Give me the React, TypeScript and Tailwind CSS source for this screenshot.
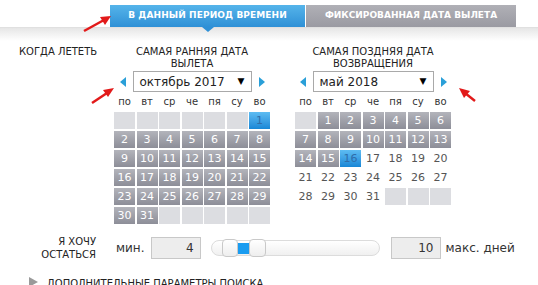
import React from "react";

const font = { fontFamily: '"DejaVu Sans", Verdana, sans-serif' };

type Cell = { t: string; k: "e" | "g" | "b" | "p" };

function Cal({ cells }: { cells: Cell[] }) {
  const days = ["по", "вт", "ср", "че", "пя", "су", "во"];
  return (
    <div className="flex flex-col">
      <div className="grid grid-cols-[repeat(7,21px)] gap-x-[1.5px] h-[20px] items-center">
        {days.map((d) => (
          <div key={d} className="text-center text-[10px] text-[#333] leading-none">
            {d}
          </div>
        ))}
      </div>
      <div className="grid grid-cols-[repeat(7,21px)] gap-x-[1.5px] gap-y-[2px]">
        {cells.map((c, i) => {
          let cls = "";
          if (c.k === "e") cls = "bg-[#dcdde1]";
          else if (c.k === "g") cls = "bg-gradient-to-b from-[#b3b4bb] to-[#8d8e98] text-white";
          else if (c.k === "b") cls = "bg-gradient-to-b from-[#5dbcf2] to-[#1787d6] text-[#2f6eaa]";
          else cls = "bg-white text-[#555]";
          return (
            <div key={i} className={`h-[17px] flex items-center justify-center text-[11px] leading-none ${cls}`}>
              {c.t}
            </div>
          );
        })}
      </div>
    </div>
  );
}

function Arrow({ dir }: { dir: "l" | "r" }) {
  return (
    <svg width="6" height="10" viewBox="0 0 6 10">
      {dir === "l" ? <polygon points="6,0 0,5 6,10" fill="#2a9fd8" /> : <polygon points="0,0 6,5 0,10" fill="#2a9fd8" />}
    </svg>
  );
}

function Select({ text, w }: { text: string; w: string }) {
  return (
    <div className={`h-[21px] ${w} border border-[#a9a9a9] bg-white flex items-center justify-between pl-[6px] pr-[6px]`}>
      <span className="text-[12px] text-[#222] leading-none">{text}</span>
      <span className="text-[9px] text-black leading-none">▼</span>
    </div>
  );
}

export default function App() {
  const left: Cell[] = [];
  for (let i = 0; i < 6; i++) left.push({ t: "", k: "e" });
  left.push({ t: "1", k: "b" });
  for (let d = 2; d <= 31; d++) left.push({ t: String(d), k: "g" });
  for (let i = 0; i < 5; i++) left.push({ t: "", k: "e" });

  const right: Cell[] = [{ t: "", k: "e" }];
  for (let d = 1; d <= 31; d++) right.push({ t: String(d), k: d < 16 ? "g" : d === 16 ? "b" : "p" });
  for (let i = 0; i < 3; i++) right.push({ t: "", k: "e" });

  return (
    <div className="relative w-[538px] h-[285px] overflow-hidden bg-white" style={font}>
      {/* tabs */}
      <div className="flex pt-[5px] pl-[110px] h-[27px]">
        <div className="relative w-[195px] h-[22px] bg-gradient-to-b from-[#55b4ea] to-[#2e90d6] flex items-center justify-center">
          <span className="text-white text-[9px] font-bold tracking-[0.1px]">В ДАННЫЙ ПЕРИОД ВРЕМЕНИ</span>
          <div className="absolute left-[92px] top-[22px] w-0 h-0 border-l-[6px] border-r-[6px] border-t-[5px] border-l-transparent border-r-transparent border-t-[#2e90d6]" />
        </div>
        <div className="ml-[1px] w-[210px] h-[22px] bg-gradient-to-b from-[#b0b0b6] to-[#9a9aa2] flex items-center justify-center">
          <span className="text-white text-[9px] font-bold">ФИКСИРОВАННАЯ ДАТА ВЫЛЕТА</span>
        </div>
      </div>
      <div className="h-[14px] bg-gradient-to-b from-[#e6e6e6] to-white border-t border-[#e0e0e0]" />

      {/* main row */}
      <div className="flex mt-[1px]">
        <div className="w-[104px] pl-[19px] pt-[4px] text-[10px] text-[#222] leading-[12px]">КОГДА ЛЕТЕТЬ</div>
        <div className="w-[176px] flex flex-col items-center">
          <div className="text-[10px] text-[#222] leading-[12px] text-center h-[29px] pt-[4px]">
            САМАЯ РАННЯЯ ДАТА
            <br />
            ВЫЛЕТА
          </div>
          <div className="flex items-center gap-[7px]">
            <Arrow dir="l" />
            <Select text="октябрь 2017" w="w-[119px]" />
            <Arrow dir="r" />
          </div>
          <Cal cells={left} />
        </div>
        <div className="w-[176px] ml-[5px] flex flex-col items-center">
          <div className="text-[10px] text-[#222] leading-[12px] text-center h-[29px] pt-[4px]">
            САМАЯ ПОЗДНЯЯ ДАТА
            <br />
            ВОЗВРАЩЕНИЯ
          </div>
          <div className="flex items-center gap-[7px]">
            <Arrow dir="l" />
            <Select text="май 2018" w="w-[121px]" />
            <Arrow dir="r" />
          </div>
          <Cal cells={right} />
        </div>
      </div>

      {/* stay row */}
      <div className="absolute left-0 top-[235px] flex items-center">
        <div className="w-[96px] text-right text-[10px] text-[#222] leading-[13px]">
          Я ХОЧУ
          <br />
          ОСТАТЬСЯ
        </div>
        <div className="ml-[20px] text-[12px] text-[#333]">мин.</div>
        <div className="ml-[6px] w-[50px] h-[22px] border border-[#c8c8c8] bg-[#ededed] flex items-center justify-end pr-[6px] text-[12px] text-[#333]">
          4
        </div>
        <div className="relative ml-[10px] w-[169px] h-[16px] rounded-full border border-[#dcdcdc] bg-gradient-to-b from-white to-[#f0f0f0]">
          <div className="absolute left-[10px] top-[-2px] w-[16px] h-[18px] rounded-[4px] border border-[#c9c9c9] bg-gradient-to-b from-white to-[#eeeeee]" />
          <div className="absolute left-[26px] top-[2px] w-[11px] h-[11px] bg-[#1a9cf0]" />
          <div className="absolute left-[37px] top-[-2px] w-[17px] h-[18px] rounded-[4px] border border-[#c9c9c9] bg-gradient-to-b from-white to-[#eeeeee]" />
        </div>
        <div className="ml-[11px] w-[50px] h-[22px] border border-[#c8c8c8] bg-[#ededed] flex items-center justify-end pr-[6px] text-[12px] text-[#333]">
          10
        </div>
        <div className="ml-[5px] text-[12px] text-[#333]">макс. дней</div>
      </div>

      {/* more params */}
      <div className="absolute left-[29px] top-[277px] flex items-start">
        <svg width="9" height="10" viewBox="0 0 9 10">
          <polygon points="0,0 9,5 0,10" fill="#9a9a9a" />
        </svg>
        <span className="ml-[9px] text-[10px] text-[#222] leading-none mt-[2px]">ДОПОЛНИТЕЛЬНЫЕ ПАРАМЕТРЫ ПОИСКА</span>
      </div>

      {/* red arrows */}
      <svg className="absolute left-0 top-0 pointer-events-none" width="538" height="285">
        <g fill="#e21a1a" stroke="#e21a1a">
          <line x1="84" y1="31" x2="104" y2="20" strokeWidth="2.5" />
          <polygon points="111,16 100,17 105,25" stroke="none" />
          <line x1="92" y1="103" x2="107" y2="93" strokeWidth="2.5" />
          <polygon points="114,88 103,90 108,97" stroke="none" />
          <line x1="475" y1="101" x2="465" y2="93" strokeWidth="2.5" />
          <polygon points="459,88 470,91 464,98" stroke="none" />
        </g>
      </svg>
    </div>
  );
}
